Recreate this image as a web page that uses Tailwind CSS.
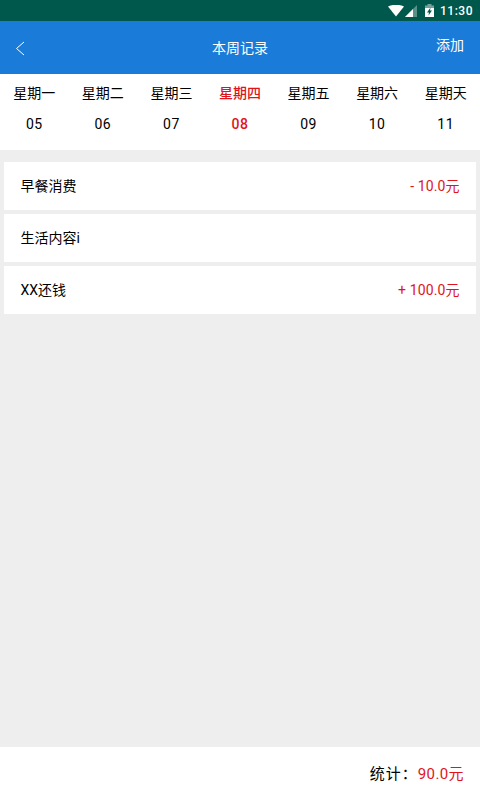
<!DOCTYPE html>
<html lang="zh-CN">
<head>
<meta charset="utf-8">
<script src="https://cdn.jsdelivr.net/npm/@tailwindcss/browser@4"></script>
</head>
<body class="m-0">
<div class="w-[480px] h-[800px] flex flex-col overflow-hidden bg-[#eeeeee] text-black font-['Roboto','Noto_Sans_CJK_SC',sans-serif]">
  <div class="h-[21px] bg-[#00574b] flex items-center justify-end text-white">
    <svg class="w-[16px] h-[12px]" viewBox="0 0 16 12"><path d="M0 1.5Q8-2 16 1.5L8 11.5Z" fill="#fff"/></svg>
    <svg class="w-[12px] h-[12px] ml-[1px]" viewBox="0 0 12 12"><path d="M12 0V12H0Z" fill="#fff" fill-opacity=".35"/><path d="M8 4V12H0Z" fill="#fff"/></svg>
    <svg class="w-[9px] h-[13px] ml-[8px]" viewBox="0 0 9 13"><path d="M2.5 0H6.500V1.500H9V13H0V1.500H2.500Z" fill="#fff" fill-opacity=".45"/><path d="M0 4H9V13H0Z" fill="#fff"/><path d="M5.500 3.500L2 8.500H4L3.500 11.500L7 6.500H5Z" fill="#00574b"/></svg>
    <span class="ml-[6px] mr-[7px] text-[12px] leading-none font-medium tracking-[0.5px]">11:30</span>
  </div>
  <div class="h-[53px] bg-[#1a7cd8] relative flex items-center justify-center text-white shrink-0">
    <svg class="absolute left-[15px] top-[20px] w-[10px] h-[15px]" viewBox="0 0 10 15" fill="none" stroke="#fff" stroke-width="1"><path d="M9 1L1.500 7.500L9 14"/></svg>
    <span class="text-[14px] leading-none">本周记录</span>
    <span class="absolute right-[16px] top-[17px] text-[14px] leading-none">添加</span>
  </div>
  <div class="h-[76px] bg-white grid grid-cols-7 shrink-0 pt-[11px] text-center text-[14px] leading-[16px]">
    <div class="flex flex-col gap-[15px]"><span>星期一</span><span class="tracking-[0.5px]">05</span></div>
    <div class="flex flex-col gap-[15px]"><span>星期二</span><span class="tracking-[0.5px]">06</span></div>
    <div class="flex flex-col gap-[15px]"><span>星期三</span><span class="tracking-[0.5px]">07</span></div>
    <div class="flex flex-col gap-[15px] text-[#e0141c] font-medium"><span>星期四</span><span class="tracking-[0.5px]">08</span></div>
    <div class="flex flex-col gap-[15px]"><span>星期五</span><span class="tracking-[0.5px]">09</span></div>
    <div class="flex flex-col gap-[15px]"><span>星期六</span><span class="tracking-[0.5px]">10</span></div>
    <div class="flex flex-col gap-[15px]"><span>星期天</span><span class="tracking-[0.5px]">11</span></div>
  </div>
  <div class="flex-1 flex flex-col gap-[4px] pt-[12px] px-[4px] text-[14px]">
    <div class="h-[48px] bg-white flex items-center justify-between px-[16.500px]"><span>早餐消费</span><span class="text-[#e0141c] tracking-[0.1px]">- 10.0元</span></div>
    <div class="h-[48px] bg-white flex items-center justify-between px-[16.500px]"><span>生活内容i</span></div>
    <div class="h-[48px] bg-white flex items-center justify-between px-[16.500px]"><span>XX还钱</span><span class="text-[#e0141c] tracking-[0.1px]">+ 100.0元</span></div>
  </div>
  <div class="h-[53px] bg-white shrink-0 flex items-center justify-end pr-[16px] pt-[1px] text-[15px]"><span class="tracking-[1px]">统计<span class="font-['Roboto','Noto_Sans_CJK_TC',sans-serif]">：</span></span><span class="text-[#e0141c] tracking-[0.4px]">90.0元</span></div>
</div>
</body>
</html>
